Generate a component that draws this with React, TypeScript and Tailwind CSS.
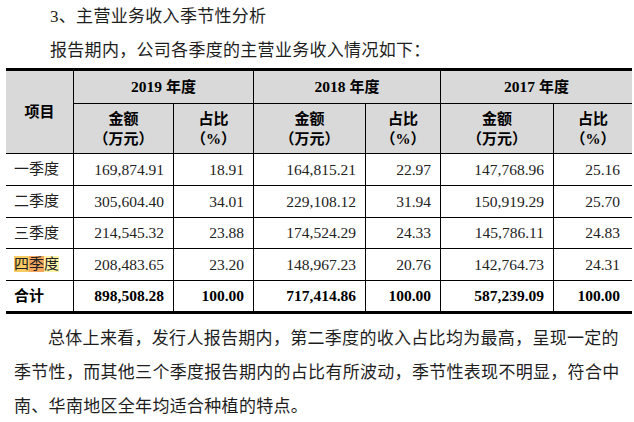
const cols = "grid grid-cols-[68px_100px_80px_112px_75px_113px_78px]";

type Row = { label: React.ReactNode; values: string[]; h: string; last?: boolean; bold?: boolean };

const rows: Row[] = [
  { label: "一季度", values: ["169,874.91", "18.91", "164,815.21", "22.97", "147,768.96", "25.16"], h: "h-[32px]" },
  { label: "二季度", values: ["305,604.40", "34.01", "229,108.12", "31.94", "150,919.29", "25.70"], h: "h-[32px]" },
  { label: "三季度", values: ["214,545.32", "23.88", "174,524.29", "24.33", "145,786.11", "24.83"], h: "h-[31px]" },
  {
    label: (
      <span className="leading-[21px]">
        <span className="bg-[#f8cc62]">四</span>
        <span className="bg-[#f3a75e]">季</span>
        <span className="bg-[#fff3a6]">度</span>
      </span>
    ),
    values: ["208,483.65", "23.20", "148,967.23", "20.76", "142,764.73", "24.31"],
    h: "h-[32px]",
  },
  { label: "合计", values: ["898,508.28", "100.00", "717,414.86", "100.00", "587,239.09", "100.00"], h: "h-[30px]", last: true, bold: true },
];

const YearHead = ({ year, last }: { year: string; last?: boolean }) => (
  <div className={`col-span-2 flex items-center justify-center border-b border-black font-bold ${last ? "" : "border-r"}`}>
    <span className="text-[15.5px]">{year}</span>
    <span className="ml-[4px]">年度</span>
  </div>
);

const SubHead = ({ last }: { last?: boolean }) => (
  <>
    <div className="flex flex-col items-center justify-center border-r border-black font-bold leading-[20px]">
      <span>金额</span>
      <span>（万元）</span>
    </div>
    <div className={`flex flex-col items-center justify-center font-bold leading-[20px] border-black ${last ? "" : "border-r"}`}>
      <span>占比</span>
      <span>（%）</span>
    </div>
  </>
);

export default function App() {
  return (
    <div className="w-[634px] h-[422px] bg-white text-[#1e1e1e] font-['Liberation_Serif','Noto_Sans_CJK_SC',serif]">
      <div className="pl-[50px] text-[17px] tracking-[0.3px] leading-[34px]">3、主营业务收入季节性分析</div>
      <div className="pl-[50px] text-[17px] tracking-[0.3px] leading-[34px]">报告期内，公司各季度的主营业务收入情况如下：</div>

      <div className="ml-[6px] w-[626px] border-t-[3px] border-b-[3px] border-black text-[15px] text-black">
        <div className={`${cols} grid-rows-[33px_49px] bg-[#d9d9d9] border-b border-black`}>
          <div className="row-span-2 flex items-center justify-center border-r border-black font-bold">项目</div>
          <YearHead year="2019" />
          <YearHead year="2018" />
          <YearHead year="2017" last />
          <SubHead />
          <SubHead />
          <SubHead last />
        </div>
        {rows.map((r, i) => (
          <div key={i} className={`${cols} ${r.h} ${r.last ? "" : "border-b border-black"} text-[#222]`}>
            <div className={`flex items-center border-r border-black pl-[8px] ${r.bold ? "font-bold text-black" : ""}`}>{r.label}</div>
            {r.values.map((v, j) => (
              <div
                key={j}
                className={`flex items-center justify-end text-[15.5px] border-black ${j === 5 ? "pr-[12px]" : "border-r pr-[9px]"} ${r.bold ? "font-bold text-black" : ""}`}
              >
                {v}
              </div>
            ))}
          </div>
        ))}
      </div>

      <div className="mt-[8px] pl-[14px] text-[17px] tracking-[0.3px] leading-[34px]">
        <div className="pl-[34px]">总体上来看，发行人报告期内，第二季度的收入占比均为最高，呈现一定的</div>
        <div>季节性，而其他三个季度报告期内的占比有所波动，季节性表现不明显，符合中</div>
        <div>南、华南地区全年均适合种植的特点。</div>
      </div>
    </div>
  );
}
